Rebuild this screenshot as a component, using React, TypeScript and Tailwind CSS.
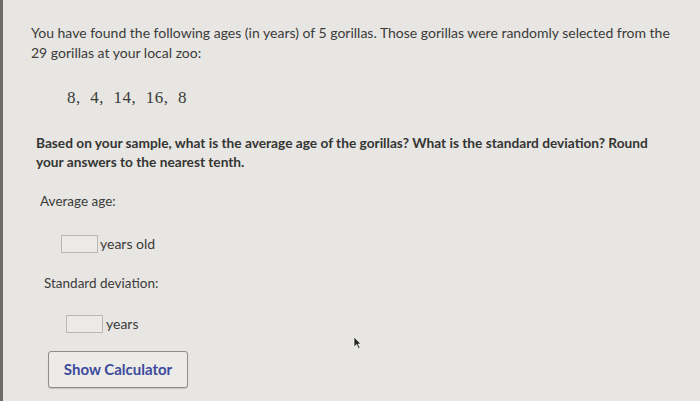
export default function App() {
  return (
    <div className="w-[700px] h-[401px] overflow-hidden relative bg-[#e7e6e2] flex font-['Lato',sans-serif] text-[#3b3b3a]">
      {/* left screen edge */}
      <div className="w-[3px] h-full bg-[#6d6c69] shrink-0" />
      <div className="flex-1 flex flex-col pt-[23px]">
        <p className="ml-[28px] text-[14px] leading-[20px] whitespace-nowrap">
          You have found the following ages (in years) of 5 gorillas. Those gorillas were randomly selected from the
          <br />
          29 gorillas at your local zoo:
        </p>

        <div className="ml-[64px] mt-[25px] font-['Liberation_Serif',serif] text-[17px] leading-[20px] tracking-[0.5px]">
          8,&nbsp;&nbsp;4,&nbsp;&nbsp;14,&nbsp;&nbsp;16,&nbsp;&nbsp;8
        </div>

        <p className="ml-[33px] mt-[25px] text-[13.7px] leading-[19px] font-bold text-[#353534] whitespace-nowrap">
          Based on your sample, what is the average age of the gorillas? What is the standard deviation? Round
          <br />
          your answers to the nearest tenth.
        </p>

        <div className="ml-[37px] mt-[20px] text-[13.5px] leading-[20px]">Average age:</div>

        <div className="ml-[58px] mt-[22px] flex items-center gap-[2px] text-[14px]">
          <div className="w-[37px] h-[18px] border border-[#b9b8b4] bg-[#ebeae6]" />
          <span>years old</span>
        </div>

        <div className="ml-[41px] mt-[19px] text-[13.5px] leading-[20px]">Standard deviation:</div>

        <div className="ml-[63px] mt-[20px] flex items-center gap-[3px] text-[14px]">
          <div className="w-[37px] h-[18px] border border-[#b9b8b4] bg-[#ebeae6]" />
          <span>years</span>
        </div>

        <button className="ml-[45px] mt-[17px] w-[140px] h-[37px] border border-[#8e8d8a] rounded-[3px] bg-[#ecebe7] shadow-[0_1px_1px_rgba(0,0,0,0.15)] text-[15px] font-bold text-[#3d4a9c] text-center">
          Show Calculator
        </button>
      </div>

      {/* mouse cursor */}
      <svg className="absolute left-[353px] top-[336px]" width="9" height="13" viewBox="0 0 9 13">
        <path d="M1 1 L1 11 L3.5 8.5 L5.5 12.5 L7 11.8 L5 8 L8 8 Z" fill="#2a2a2a" stroke="#f0f0f0" strokeWidth="0.7" />
      </svg>
    </div>
  );
}
